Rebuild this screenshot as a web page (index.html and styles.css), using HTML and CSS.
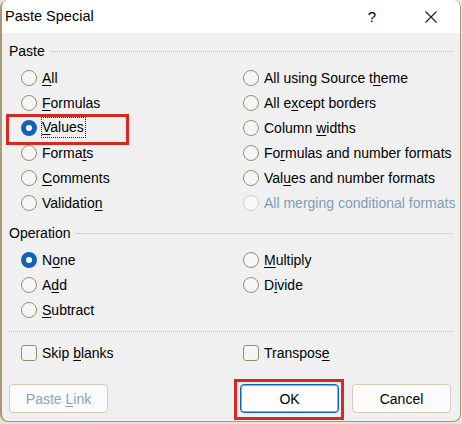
FILE: index.html
```html
<!DOCTYPE html>
<html>
<head>
<meta charset="utf-8">
<link rel="stylesheet" href="styles.css">
</head>
<body>
<div class="window">
  <div class="titlebar">
    <span class="title">Paste Special</span>
    <span class="tbtn help">?</span>
    <span class="tbtn close">
      <svg width="12" height="12" viewBox="0 0 12 12"><path d="M0.5 0.5 L11.5 11.5 M11.5 0.5 L0.5 11.5" stroke="#1a1a1a" stroke-width="1.1" fill="none"/></svg>
    </span>
  </div>
  <div class="content">
    <div class="legend"><span>Paste</span><i class="rule"></i></div>
    <div class="grid">
      <label class="opt"><i class="radio"></i><span><u>A</u>ll</span></label>
      <label class="opt"><i class="radio"></i><span>All using Source t<u>h</u>eme</span></label>
      <label class="opt"><i class="radio"></i><span><u>F</u>ormulas</span></label>
      <label class="opt"><i class="radio"></i><span>All e<u>x</u>cept borders</span></label>
      <label class="opt marked"><i class="radio on"></i><span class="focus"><u>V</u>alues</span><b class="redbox vbox"></b></label>
      <label class="opt"><i class="radio"></i><span>Column <u>w</u>idths</span></label>
      <label class="opt"><i class="radio"></i><span>Forma<u>t</u>s</span></label>
      <label class="opt"><i class="radio"></i><span>Fo<u>r</u>mulas and number formats</span></label>
      <label class="opt"><i class="radio"></i><span><u>C</u>omments</span></label>
      <label class="opt"><i class="radio"></i><span>Val<u>u</u>es and number formats</span></label>
      <label class="opt"><i class="radio"></i><span>Validatio<u>n</u></span></label>
      <label class="opt disabled"><i class="radio"></i><span>All merging conditional formats</span></label>
    </div>
    <div class="legend op"><span>Operation</span><i class="rule"></i></div>
    <div class="grid">
      <label class="opt"><i class="radio on"></i><span>N<u>o</u>ne</span></label>
      <label class="opt"><i class="radio"></i><span><u>M</u>ultiply</span></label>
      <label class="opt"><i class="radio"></i><span>A<u>d</u>d</span></label>
      <label class="opt"><i class="radio"></i><span>D<u>i</u>vide</span></label>
      <label class="opt"><i class="radio"></i><span><u>S</u>ubtract</span></label>
      <span></span>
    </div>
    <div class="sep"></div>
    <div class="grid checks">
      <label class="opt"><i class="check"></i><span>Skip <u>b</u>lanks</span></label>
      <label class="opt"><i class="check"></i><span>Transpos<u>e</u></span></label>
    </div>
    <div class="buttons">
      <button class="btn disabled-btn">Paste <u>L</u>ink</button>
      <button class="btn ok">OK<b class="redbox okbox"></b></button>
      <button class="btn cancel">Cancel</button>
    </div>
  </div>
</div>
</body>
</html>
```

FILE: styles.css
```css
html, body {
  margin: 0;
  padding: 0;
}
body {
  width: 462px;
  height: 424px;
  background: #ebe4d4;
  font-family: "Liberation Sans", Arial, sans-serif;
  font-size: 14px;
  color: #000;
  overflow: hidden;
}
.window {
  width: 461px;
  height: 422px;
  box-sizing: border-box;
  border: 1px solid #a8987a;
  border-left-width: 2px;
  border-top: none;
  border-radius: 8px;
  overflow: hidden;
  background: #f0f0f0;
  display: flex;
  flex-direction: column;
}
.titlebar {
  height: 33px;
  background: #fff;
  display: flex;
  align-items: center;
  padding-left: 3px;
  flex: none;
}
.title {
  font-size: 14.5px;
  flex: 1;
  padding-bottom: 1px;
}
.tbtn {
  width: 46px;
  height: 33px;
  display: flex;
  align-items: center;
  justify-content: center;
}
.help {
  font-size: 15px;
  margin-right: 13px;
}
.close {
  margin-right: 6px;
}
.content {
  padding: 8px 7px 0 7px;
  flex: 1;
}
.legend {
  display: flex;
  align-items: center;
  height: 21px;
  line-height: 21px;
}
.legend.op {
  margin-top: 8px;
}
.rule {
  flex: 1;
  height: 0;
  border-top: 1px dotted #c9ba94;
  margin-left: 6px;
  margin-right: 1px;
}
.grid {
  display: grid;
  grid-template-columns: 222px 1fr;
  grid-auto-rows: 25px;
  padding-left: 12px;
  margin-top: 3px;
}
.grid.checks {
  margin-top: 8px;
}
.opt {
  display: flex;
  align-items: center;
  gap: 5px;
  position: relative;
  white-space: nowrap;
}
.radio {
  width: 16px;
  height: 16px;
  box-sizing: border-box;
  border-radius: 50%;
  border: 1px solid #9c8c6e;
  background: #f7f7f7;
  flex: none;
}
.radio.on {
  border: 5px solid #1462b6;
  background: #fff;
}
.disabled .radio {
  border-color: #d9d0bb;
  background: #f8f8f8;
}
.disabled span {
  color: #7f9db8;
}
.check {
  width: 16px;
  height: 16px;
  box-sizing: border-box;
  border-radius: 3px;
  border: 1px solid #9c8c6e;
  background: #f5f5f5;
  flex: none;
}
.focus {
  border: 1px dotted #222;
  margin-left: -1px;
  line-height: 19px;
  padding: 0 1px 0 0;
}
.redbox {
  position: absolute;
  border: 3px solid #d52a1f;
  box-sizing: border-box;
  pointer-events: none;
}
.vbox {
  left: -15px;
  top: -1px;
  width: 123px;
  height: 31px;
}
.sep {
  margin-top: 9px;
  height: 0;
  border-top: 1px dotted #c9ba94;
  margin-right: 1px;
}
.buttons {
  display: flex;
  margin-top: 19px;
  padding-right: 2px;
}
.btn {
  width: 99px;
  height: 29px;
  box-sizing: border-box;
  border-radius: 4px;
  border: 1px solid #d3cbb6;
  background: #fbfbfb;
  font-family: inherit;
  font-size: 14px;
  color: #000;
  padding: 0;
  position: relative;
}
.disabled-btn {
  color: #86a6bf;
}
.ok {
  margin-left: auto;
  border: 1px solid #0a64c4;
  box-shadow: inset 0 0 0 0.5px #0a64c4;
  background: #fdfdfd;
}
.cancel {
  margin-left: 13px;
}
.okbox {
  left: -7px;
  top: -6px;
  width: 110px;
  height: 41px;
}
u {
  text-decoration-thickness: 1px;
  text-underline-offset: 2px;
}
```
